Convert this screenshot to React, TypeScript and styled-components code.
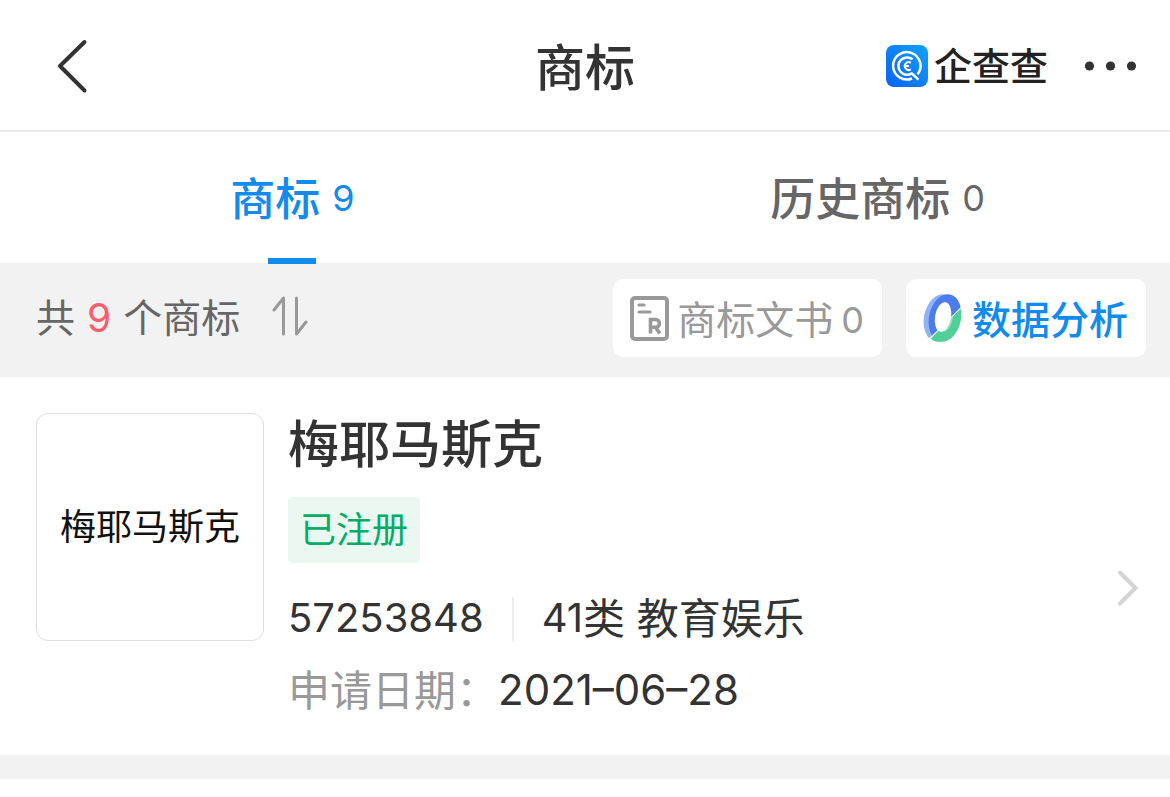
import React from "react";
import styled, { createGlobalStyle } from "styled-components";

const GlobalStyle = createGlobalStyle`
  *, *::before, *::after { box-sizing: border-box; }
  body {
    margin: 0;
    background: #ffffff;
    color: #333333;
    font-family: Inter, "Noto Sans CJK SC", sans-serif;
  }
  h1, h2, p { margin: 0; font-weight: inherit; font-size: inherit; }
  button { border: 0; padding: 0; background: none; font: inherit; color: inherit; cursor: pointer; }
  a { color: inherit; text-decoration: none; }
  svg { display: block; flex: none; }
`;

const Header = styled.header`
  display: grid;
  grid-template-columns: 1fr auto 1fr;
  align-items: center;
  height: 132px;
  padding: 2px 32px 0 56px;
  border-bottom: 2px solid #ebebeb;
`;

const BackButton = styled.button`
  justify-self: start;
`;

const PageTitle = styled.h1`
  margin-right: 24px;
  padding-top: 4px;
  font-size: 50px;
  line-height: 60px;
  font-weight: 500;
`;

const HeaderActions = styled.div`
  display: flex;
  align-items: center;
  justify-self: end;
  gap: 36px;
`;

const Brand = styled.a`
  display: flex;
  align-items: center;
  gap: 6px;
  color: #222222;
  font-size: 38px;
  line-height: 44px;
  font-weight: 500;
`;

const Tabs = styled.nav`
  display: flex;
  height: 131px;
`;

const Tab = styled.button<{ $active?: boolean }>`
  position: relative;
  flex: 1;
  display: flex;
  align-items: center;
  justify-content: center;
  gap: 12px;
  padding-top: 4px;
  color: ${(p) => (p.$active ? "#128bed" : "#666666")};
  font-size: 45px;
  line-height: 60px;
  font-weight: 500;

  &::after {
    content: "";
    display: ${(p) => (p.$active ? "block" : "none")};
    position: absolute;
    left: 50%;
    bottom: -1px;
    width: 48px;
    height: 6px;
    margin-left: -25px;
    background: #128bed;
  }
`;

const TabCount = styled.span`
  padding-bottom: 4px;
  font-size: 36px;
  font-weight: 400;
`;

const Toolbar = styled.section`
  display: flex;
  align-items: center;
  justify-content: space-between;
  padding: 16px 24px 20px 36px;
  background: #f2f2f2;
`;

const ToolbarGroup = styled.div<{ $wide?: boolean }>`
  display: flex;
  align-items: center;
  gap: ${(p) => (p.$wide ? 32 : 24)}px;
`;

const Total = styled.p`
  display: flex;
  gap: 12px;
  color: #666666;
  font-size: 39px;
  line-height: 60px;
`;

const TotalNumber = styled.strong`
  color: #ff5b6a;
  font-weight: 400;
`;

const Chip = styled.button<{ $primary?: boolean }>`
  display: flex;
  align-items: center;
  gap: 8px;
  height: 78px;
  padding: 0 18px 0 16px;
  border-radius: 10px;
  background: #ffffff;
  color: ${(p) => (p.$primary ? "#128bed" : "#999999")};
  font-size: 39px;
  line-height: 60px;
  font-weight: ${(p) => (p.$primary ? 500 : 400)};

  span { padding-top: 4px; }
`;

const ChipCount = styled.span`
  font-size: 36px;
`;

const Card = styled.a`
  display: flex;
  align-items: center;
  gap: 24px;
  padding: 36px 30px 28px 36px;
  border-bottom: 24px solid #f2f2f2;
`;

const Thumb = styled.div`
  display: flex;
  align-items: center;
  justify-content: center;
  flex: none;
  align-self: flex-start;
  width: 228px;
  height: 228px;
  border: 1px solid #dddddd;
  border-radius: 12px;
  color: #111111;
  font-size: 36px;
  line-height: 60px;
`;

const Info = styled.div`
  flex: 1;
  min-width: 0;
`;

const Name = styled.h2`
  padding: 2px 0;
  font-size: 51px;
  line-height: 60px;
  font-weight: 500;
`;

const Status = styled.p`
  width: fit-content;
  margin: 20px 0;
  padding: 0 12px;
  border-radius: 4px;
  background: #ebf8f2;
  color: #00ad65;
  font-size: 36px;
  line-height: 66px;
`;

const Detail = styled.p`
  display: flex;
  align-items: center;
  height: 72px;
  font-size: 42px;
  line-height: 60px;
`;

const Digits = styled.span<{ $large?: boolean }>`
  padding-bottom: 2px;
  font-size: ${(p) => (p.$large ? 42 : 40)}px;
`;

const Divider = styled.span`
  width: 2px;
  height: 44px;
  margin: 0 28px;
  background: #eeeeee;
`;

const Label = styled.span`
  color: #999999;
`;

const ChevronBox = styled.span`
  margin-top: 36px;
`;

const BackIcon = () => (
  <svg width="32" height="56" viewBox="0 0 32 56" fill="none" stroke="#333333" strokeWidth="4" strokeLinecap="round" strokeLinejoin="round" aria-hidden="true">
    <path d="M28.500 4L4 28L28.500 52.500" />
  </svg>
);

const BrandIcon = () => (
  <svg width="42" height="42" viewBox="0 0 42 42" fill="none" stroke="#ffffff" strokeLinejoin="round" aria-hidden="true">
    <defs>
      <linearGradient id="brand" x1="0" y1="1" x2="1" y2="0">
        <stop offset="0" stopColor="#0a62f5" />
        <stop offset="1" stopColor="#12a2fb" />
      </linearGradient>
    </defs>
    <rect width="42" height="42" rx="8" fill="url(#brand)" stroke="none" />
    <path d="M26 33.500A13.700 13.700 0 1 1 31.500 29.400" strokeWidth="2.500" />
    <path d="M26.500 14.300A8.700 8.700 0 1 0 25.800 28.400L32.500 34.600" strokeWidth="2.500" />
    <path d="M24.800 17.800A3.900 3.900 0 1 0 24.800 24.400M19 21.100H23" strokeWidth="2" />
  </svg>
);

const MoreIcon = () => (
  <svg width="54" height="12" viewBox="0 0 54 12" fill="#333333" aria-hidden="true">
    <circle cx="5.500" cy="6" r="4.600" />
    <circle cx="26.500" cy="6" r="4.600" />
    <circle cx="47.500" cy="6" r="4.600" />
  </svg>
);

const SortIcon = () => (
  <svg width="36" height="44" viewBox="0 0 36 44" fill="none" stroke="#999999" strokeWidth="3" strokeLinecap="round" strokeLinejoin="round" aria-hidden="true">
    <path d="M2 14L11.500 2V38" />
    <path d="M24.500 2V38L34 26" />
  </svg>
);

const DocumentIcon = () => (
  <svg width="40" height="46" viewBox="0 0 40 46" fill="none" stroke="#999999" strokeWidth="4" aria-hidden="true">
    <rect x="3" y="3" width="35" height="41" rx="3" />
    <path d="M10 10H15M10 17H21" strokeWidth="3.200" strokeLinecap="round" />
    <path d="M21.500 38.500V24.500H26.500A3.900 3.900 0 0 1 26.500 32.300H21.500M26.500 32.300L30.800 38.500" strokeWidth="3.600" />
  </svg>
);

const ChartIcon = () => (
  <svg width="42" height="50" viewBox="0 0 42 50" aria-hidden="true">
    <defs>
      <clipPath id="upper">
        <path d="M0 0H42V11L7 45.500L0 50Z" />
      </clipPath>
      <clipPath id="lower">
        <path d="M42 12.500V50H4L8.500 46Z" />
      </clipPath>
    </defs>
    <g clipPath="url(#upper)">
      <ellipse cx="18" cy="25" rx="16" ry="24" transform="rotate(12 18 25)" fill="#91b2f7" />
      <ellipse cx="23" cy="25" rx="16" ry="24" transform="rotate(12 23 25)" fill="#4c7bec" />
    </g>
    <g clipPath="url(#lower)">
      <ellipse cx="19" cy="25" rx="16" ry="24" transform="rotate(12 19 25)" fill="#46cf93" />
      <ellipse cx="23" cy="25" rx="16" ry="24" transform="rotate(12 23 25)" fill="#52cf98" />
      <ellipse cx="23" cy="24" rx="8" ry="15" transform="rotate(10 23 24)" fill="#93e0bd" />
    </g>
    <ellipse cx="21" cy="24" rx="8" ry="15" transform="rotate(10 21 24)" fill="#ffffff" />
  </svg>
);

const ChevronIcon = () => (
  <svg width="24" height="40" viewBox="0 0 24 40" fill="none" stroke="#d4d4d4" strokeWidth="4" strokeLinecap="round" aria-hidden="true">
    <path d="M4 4.500L19.500 20L4 35.500" />
  </svg>
);

export default function App() {
  return (
    <div lang="zh-CN">
      <GlobalStyle />
      <Header>
        <BackButton type="button" aria-label="返回">
          <BackIcon />
        </BackButton>
        <PageTitle>商标</PageTitle>
        <HeaderActions>
          <Brand href="#">
            <BrandIcon />
            企查查
          </Brand>
          <button type="button" aria-label="更多">
            <MoreIcon />
          </button>
        </HeaderActions>
      </Header>
      <Tabs>
        <Tab type="button" $active aria-current="page">
          商标<TabCount>9</TabCount>
        </Tab>
        <Tab type="button">
          历史商标<TabCount>0</TabCount>
        </Tab>
      </Tabs>
      <main>
        <Toolbar>
          <ToolbarGroup $wide>
            <Total>
              <span>共</span>
              <TotalNumber>9</TotalNumber>
              <span>个商标</span>
            </Total>
            <button type="button" aria-label="排序">
              <SortIcon />
            </button>
          </ToolbarGroup>
          <ToolbarGroup>
            <Chip type="button">
              <DocumentIcon />
              <span>商标文书</span>
              <ChipCount>0</ChipCount>
            </Chip>
            <Chip type="button" $primary>
              <ChartIcon />
              <span>数据分析</span>
            </Chip>
          </ToolbarGroup>
        </Toolbar>
        <Card href="#">
          <Thumb>梅耶马斯克</Thumb>
          <Info>
            <Name>梅耶马斯克</Name>
            <Status>已注册</Status>
            <Detail>
              <Digits>57253848</Digits>
              <Divider />
              <Digits>41</Digits>
              <span>类 教育娱乐</span>
            </Detail>
            <Detail>
              <Label>申请日期：</Label>
              <Digits $large>2021–06–28</Digits>
            </Detail>
          </Info>
          <ChevronBox>
            <ChevronIcon />
          </ChevronBox>
        </Card>
      </main>
    </div>
  );
}
